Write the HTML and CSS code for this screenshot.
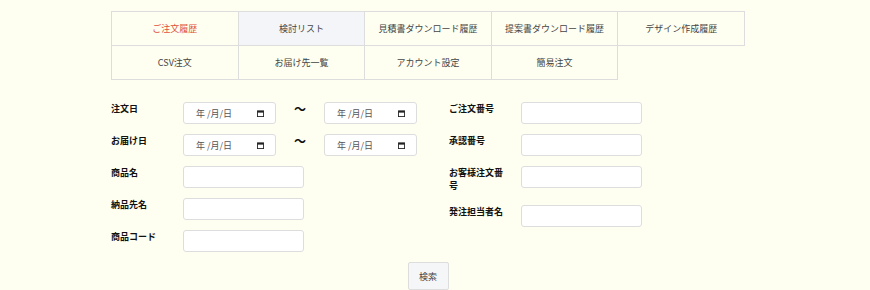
FILE: index.html
```html
<!DOCTYPE html>
<html lang="ja">
<head>
    <meta charset="UTF-8">
    <meta name="viewport" content="width=device-width, initial-scale=1.0">
    <title>ご注文履歴</title>
    <link rel="stylesheet" href="styles.css">
</head>
<body>

    <div class="wrap">

        <!-- Tabs -->
        <div class="tabs">
            <a class="tab active">ご注文履歴</a>
            <a class="tab hover">検討リスト</a>
            <a class="tab">見積書ダウンロード履歴</a>
            <a class="tab">提案書ダウンロード履歴</a>
            <a class="tab">デザイン作成履歴</a>
            <a class="tab">CSV注文</a>
            <a class="tab">お届け先一覧</a>
            <a class="tab">アカウント設定</a>
            <a class="tab">簡易注文</a>
        </div>

        <!-- Search form -->
        <div class="search">
            <div class="col">
                <div class="row">
                    <label class="lbl">注文日</label>
                    <div class="date"><span>年 /月/日</span><svg class="cal" viewBox="0 0 8 8"><rect x="0.5" y="1" width="7" height="6.5" fill="none" stroke="#222" stroke-width="1"/><rect x="0.5" y="1" width="7" height="2" fill="#222"/></svg></div>
                    <span class="tilde">〜</span>
                    <div class="date"><span>年 /月/日</span><svg class="cal" viewBox="0 0 8 8"><rect x="0.5" y="1" width="7" height="6.5" fill="none" stroke="#222" stroke-width="1"/><rect x="0.5" y="1" width="7" height="2" fill="#222"/></svg></div>
                </div>
                <div class="row">
                    <label class="lbl">お届け日</label>
                    <div class="date"><span>年 /月/日</span><svg class="cal" viewBox="0 0 8 8"><rect x="0.5" y="1" width="7" height="6.5" fill="none" stroke="#222" stroke-width="1"/><rect x="0.5" y="1" width="7" height="2" fill="#222"/></svg></div>
                    <span class="tilde">〜</span>
                    <div class="date"><span>年 /月/日</span><svg class="cal" viewBox="0 0 8 8"><rect x="0.5" y="1" width="7" height="6.5" fill="none" stroke="#222" stroke-width="1"/><rect x="0.5" y="1" width="7" height="2" fill="#222"/></svg></div>
                </div>
                <div class="row">
                    <label class="lbl">商品名</label>
                    <input type="text" class="txt">
                </div>
                <div class="row">
                    <label class="lbl">納品先名</label>
                    <input type="text" class="txt">
                </div>
                <div class="row">
                    <label class="lbl">商品コード</label>
                    <input type="text" class="txt">
                </div>
            </div>
            <div class="col">
                <div class="row">
                    <label class="lbl">ご注文番号</label>
                    <input type="text" class="txt">
                </div>
                <div class="row">
                    <label class="lbl">承認番号</label>
                    <input type="text" class="txt">
                </div>
                <div class="row">
                    <label class="lbl">お客様注文番号</label>
                    <input type="text" class="txt">
                </div>
                <div class="row">
                    <label class="lbl">発注担当者名</label>
                    <input type="text" class="txt">
                </div>
            </div>
        </div>

        <div class="actions">
            <button class="btn">検索</button>
        </div>

    </div>

</body>
</html>
```

FILE: styles.css
```css
body { margin: 0; background: #fefff0; font-family: "Noto Sans CJK JP", "Noto Sans", sans-serif; color: #444; }
.wrap { width: 634px; margin: 11px 0 0 111px; }

/* tabs */
.tabs { display: grid; grid-template-columns: repeat(5, 1fr); border-top: 1px solid #ddd; border-left: 1px solid #ddd; }
.tab { height: 33px; display: flex; align-items: center; justify-content: center; border-right: 1px solid #ddd; border-bottom: 1px solid #ddd; font-size: 9px; color: #444; cursor: pointer; }
.tab.active { color: #e0503c; }
.tab.hover { background: #f4f5f8; }

/* form */
.search { display: grid; grid-template-columns: 338px 1fr; margin-top: 22px; }
.row { display: flex; align-items: flex-start; margin-bottom: 10px; }
.lbl { width: 60px; padding: 1px 12px 3px 0; font-size: 9px; font-weight: bold; line-height: 12.5px; color: #111; }
.txt { box-sizing: border-box; width: 121px; height: 22px; border: 1px solid #ddd; border-radius: 3px; background: #fff; margin: 0; }
.date { box-sizing: border-box; width: 93px; height: 22px; border: 1px solid #ddd; border-radius: 3px; background: #fff; display: flex; align-items: center; justify-content: space-between; padding: 0 11px 0 12px; font-size: 9px; color: #555; }
.cal { width: 7px; height: 7px; }
.tilde { width: 48px; text-align: center; font-size: 12px; font-weight: bold; line-height: 14px; color: #111; }

.actions { display: flex; justify-content: center; }
.btn { width: 41px; height: 28px; border: 1px solid #ddd; border-radius: 2px; background: #f5f6f8; font-family: inherit; font-size: 9px; color: #444; padding: 0; cursor: pointer; }
```
